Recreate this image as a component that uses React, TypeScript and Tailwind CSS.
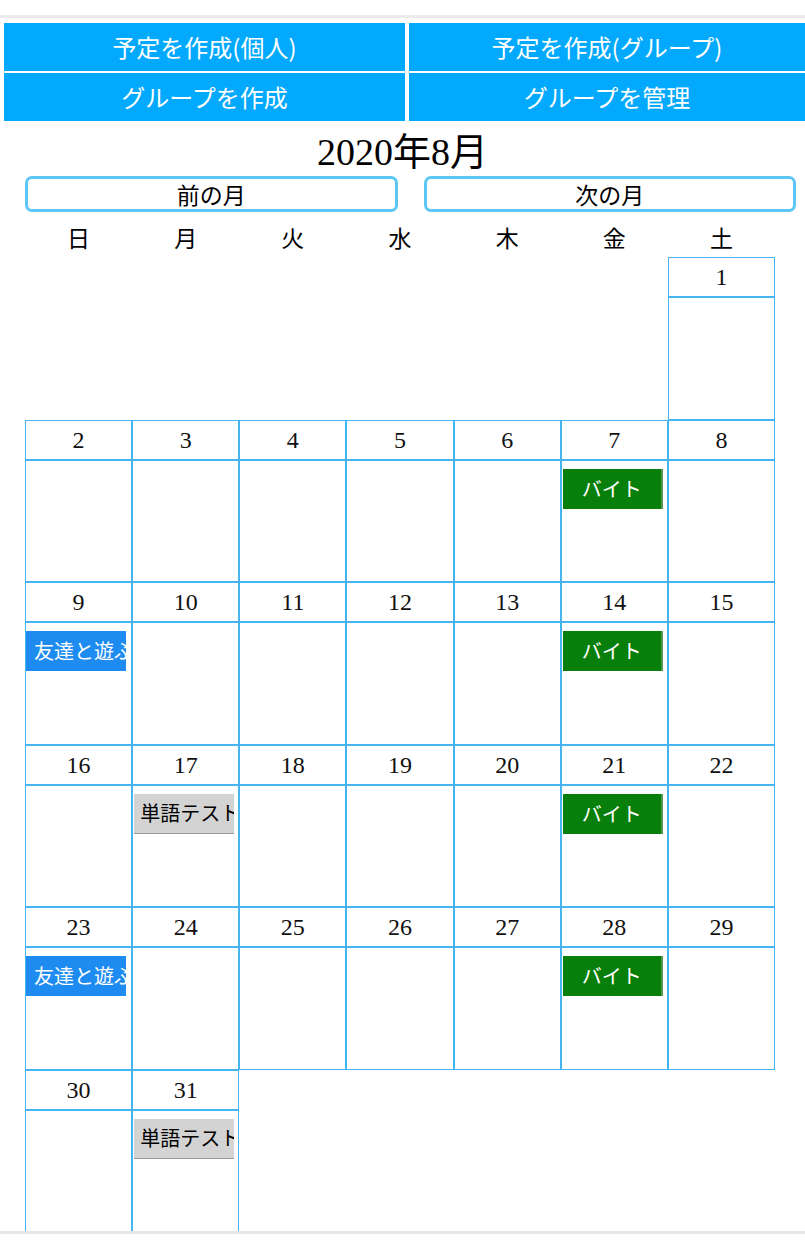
import React from "react";

type Ev = { label: string; kind: "green" | "blue" | "gray" };

const events: Record<number, Ev> = {
  7: { label: "バイト", kind: "green" },
  14: { label: "バイト", kind: "green" },
  21: { label: "バイト", kind: "green" },
  28: { label: "バイト", kind: "green" },
  9: { label: "友達と遊ぶ", kind: "blue" },
  23: { label: "友達と遊ぶ", kind: "blue" },
  17: { label: "単語テスト", kind: "gray" },
  31: { label: "単語テスト", kind: "gray" },
};

const weeks: (number | null)[][] = [
  [null, null, null, null, null, null, 1],
  [2, 3, 4, 5, 6, 7, 8],
  [9, 10, 11, 12, 13, 14, 15],
  [16, 17, 18, 19, 20, 21, 22],
  [23, 24, 25, 26, 27, 28, 29],
  [30, 31, null, null, null, null, null],
];

const sans = { fontFamily: '"Noto Sans CJK JP", "Noto Sans", sans-serif' };
const serif = { fontFamily: '"Liberation Serif", "Noto Sans CJK JP", serif' };

function EventBox({ ev }: { ev: Ev }) {
  if (ev.kind === "green") {
    return (
      <div
        className="mt-[8px] ml-px w-[100px] h-[40px] bg-[#087f0a] text-white text-[20px] leading-[40px] text-center whitespace-nowrap overflow-hidden border-r-2 border-[#4f9a4f]"
        style={sans}
      >
        バイト
      </div>
    );
  }
  if (ev.kind === "blue") {
    return (
      <div
        className="mt-[8px] w-[100px] h-[40px] bg-[#1e8bf0] text-white text-[20px] leading-[40px] pl-[8px] whitespace-nowrap overflow-hidden"
        style={sans}
      >
        {ev.label}
      </div>
    );
  }
  return (
    <div
      className="mt-[8px] ml-px w-[100px] h-[40px] bg-[#d3d3d3] text-black text-[20px] leading-[38px] pl-[6px] whitespace-nowrap overflow-hidden border-b border-[#9a9a9a]"
      style={sans}
    >
      {ev.label}
    </div>
  );
}

function DayCell({ day }: { day: number | null }) {
  if (day === null) return <div className="w-full h-[162.5px]" />;
  const ev = events[day];
  return (
    <div className="w-full h-[162.5px] flex flex-col">
      <div
        className="h-[40px] border border-[#45b5f2] flex items-center justify-center text-[24px] text-[#111]"
        style={serif}
      >
        {day}
      </div>
      <div className="flex-1 border border-[#45b5f2]">
        {ev && <EventBox ev={ev} />}
      </div>
    </div>
  );
}

export default function App() {
  const topBtn =
    "h-[48px] bg-[#03a9fc] text-white text-[24px] flex items-center justify-center";
  const navBtn =
    "h-[36px] border-[3px] border-[#5cc6f4] rounded-[7px] bg-white text-[23px] text-black flex items-center justify-center";
  return (
    <div className="w-[805px] h-[1240px] bg-white relative overflow-hidden" style={sans}>
      <div className="h-[15px]" />
      <div className="h-[3px] bg-[#ebebeb]" />
      <div className="h-[5px]" />
      <div className="ml-[4px] grid grid-cols-[401px_396px] gap-x-[4px] gap-y-[2px]">
        <div className={topBtn}>予定を作成(個人)</div>
        <div className={topBtn}>予定を作成(グループ)</div>
        <div className={topBtn}>グループを作成</div>
        <div className={topBtn}>グループを管理</div>
      </div>
      <div
        className="h-[55px] pt-[8px] flex items-center justify-center text-[38px] text-black"
        style={serif}
      >
        2020年8月
      </div>
      <div className="ml-[25px] w-[771px] grid grid-cols-2 gap-x-[26px]">
        <div className={navBtn}>前の月</div>
        <div className={navBtn}>次の月</div>
      </div>
      <div className="ml-[25px] w-[750px]">
        <div className="grid grid-cols-7 h-[45px] items-center">
          {["日", "月", "火", "水", "木", "金", "土"].map((d) => (
            <div key={d} className="text-center text-[23px] text-black pt-[6px]">
              {d}
            </div>
          ))}
        </div>
        {weeks.map((w, i) => (
          <div key={i} className="grid grid-cols-7">
            {w.map((d, j) => (
              <DayCell key={j} day={d} />
            ))}
          </div>
        ))}
      </div>
      <div className="h-[3px] bg-[#e6e6e6] absolute left-0 right-0 top-[1231px]" />
    </div>
  );
}
